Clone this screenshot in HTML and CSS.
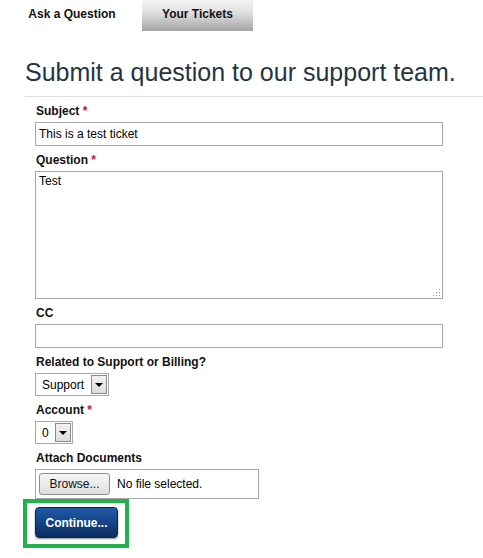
FILE: index.html
```html
<!DOCTYPE html>
<html lang="en">
<head>
    <meta charset="UTF-8">
    <title>Support</title>
    <link rel="stylesheet" href="styles.css">
</head>
<body>
<div class="tabs">
    <a class="tab active" href="#">Ask a Question</a>
    <a class="tab" href="#">Your Tickets</a>
</div>
<div class="title">
    <h1>Submit a question to our support team.</h1>
</div>
<form class="ticket">
    <label>Subject <span class="req">*</span></label>
    <input class="text" type="text" value="This is a test ticket">

    <label>Question <span class="req">*</span></label>
    <div class="area">
        <textarea>Test</textarea>
        <svg class="grip" width="9" height="9" viewBox="0 0 9 9">
            <rect x="7" y="1" width="1" height="1" fill="#999"/>
            <rect x="4" y="4" width="1" height="1" fill="#999"/>
            <rect x="7" y="4" width="1" height="1" fill="#999"/>
            <rect x="1" y="7" width="1" height="1" fill="#999"/>
            <rect x="4" y="7" width="1" height="1" fill="#999"/>
            <rect x="7" y="7" width="1" height="1" fill="#999"/>
        </svg>
    </div>

    <label>CC</label>
    <input class="text" type="text" value="">

    <label>Related to Support or Billing?</label>
    <div class="select wide">
        <span class="value">Support</span>
        <span class="arrow"><i></i></span>
    </div>

    <label>Account <span class="req">*</span></label>
    <div class="select">
        <span class="value">0</span>
        <span class="arrow"><i></i></span>
    </div>

    <label>Attach Documents</label>
    <div class="file">
        <span class="browse">Browse...</span>
        <span class="none">No file selected.</span>
    </div>

    <div class="mark">
        <button type="button" class="go">Continue...</button>
    </div>
</form>
</body>
</html>
```

FILE: styles.css
```css
*{
    padding: 0;
    margin: 0;
    box-sizing: border-box;
}
body{
    font-family: "Liberation Sans", Arial, sans-serif;
    font-size: 12px;
    color: #111;
    background: #fff;
}
.tabs{
    display: flex;
    height: 31px;
}
.tab{
    display: block;
    height: 31px;
    padding-top: 7px;
    line-height: 14px;
    text-align: center;
    font-weight: bold;
    color: #111;
    text-decoration: none;
}
.tab.active{
    width: 142px;
    padding-left: 2px;
    background: #fff;
}
.tab:not(.active){
    width: 111px;
    background: linear-gradient(#f4f4f4, #e0e0e0 40%, #a4a4a4);
}
.title{
    margin-left: 25px;
    padding-top: 26px;
    padding-bottom: 9px;
    border-bottom: 1px solid #dcdcdc;
}
.title h1{
    font-size: 25px;
    line-height: 30px;
    font-weight: normal;
    color: #27343f;
}
.ticket{
    margin-left: 35px;
    padding-top: 7px;
    width: 408px;
}
.ticket label{
    display: block;
    padding-left: 1px;
    margin-bottom: 4px;
    font-weight: bold;
    line-height: 14px;
}
.req{
    color: #c8102e;
}
.text{
    display: block;
    width: 408px;
    height: 24px;
    border: 1px solid #a9a9a9;
    padding: 0 3px;
    font: 12px "Liberation Sans", Arial, sans-serif;
    color: #000;
    margin-bottom: 7px;
}
.area{
    position: relative;
    margin-bottom: 7px;
}
.area textarea{
    display: block;
    width: 408px;
    height: 128px;
    border: 1px solid #a9a9a9;
    padding: 2px 3px;
    font: 12px/15px "Liberation Sans", Arial, sans-serif;
    color: #000;
    resize: none;
}
.grip{
    position: absolute;
    right: 2px;
    bottom: 2px;
}
.select{
    display: flex;
    align-items: center;
    width: 38px;
    height: 23px;
    border: 1px solid #a9a9a9;
    padding: 1px;
    margin-bottom: 7px;
}
.select.wide{
    width: 74px;
}
.select .value{
    flex: 1;
    padding-left: 5px;
    color: #000;
}
.select .arrow{
    display: flex;
    align-items: center;
    justify-content: center;
    width: 16px;
    height: 19px;
    border: 1px solid #8a8a8a;
    background: linear-gradient(#f2f2f2, #dcdcdc);
}
.select .arrow i{
    width: 0;
    height: 0;
    border-left: 4px solid transparent;
    border-right: 4px solid transparent;
    border-top: 4px solid #000;
}
.file{
    display: flex;
    align-items: center;
    width: 224px;
    height: 30px;
    border: 1px solid #a9a9a9;
    padding-left: 3px;
}
.browse{
    display: block;
    width: 71px;
    height: 22px;
    line-height: 20px;
    text-align: center;
    border: 1px solid #8e8e8e;
    border-radius: 3px;
    background: linear-gradient(#f6f6f6, #dedede);
    color: #111;
}
.none{
    margin-left: 7px;
    color: #000;
}
.mark{
    width: 106px;
    height: 49px;
    margin-left: -12px;
    border: 4px solid #22b14c;
    padding: 4px 0 0 8px;
}
.go{
    display: block;
    width: 83px;
    height: 31px;
    border: 1px solid #0a2350;
    border-radius: 4px;
    background: linear-gradient(#1f5aa8, #0c2d60);
    box-shadow: 0 1px 2px rgba(0, 0, 0, .45);
    color: #fff;
    font: bold 12px "Liberation Sans", Arial, sans-serif;
    cursor: pointer;
}
```
